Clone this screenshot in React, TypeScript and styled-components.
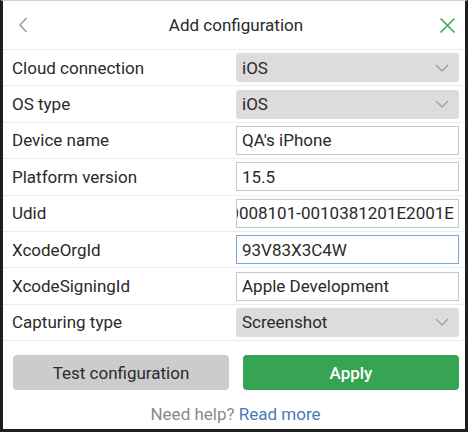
import styled, { createGlobalStyle } from "styled-components";

const GlobalStyle = createGlobalStyle`
  html, body {
    margin: 0;
    padding: 0;
    background: #ffffff;
  }
  * {
    box-sizing: border-box;
  }
`;

const Frame = styled.div`
  width: 468px;
  height: 432px;
  background: #ffffff;
  border-top: 1px solid #cfcfcf;
  border-left: 3px solid #1e1e1e;
  border-right: 3px solid #1e1e1e;
  border-bottom: 3px solid #1e1e1e;
  font-family: Roboto, "Liberation Sans", sans-serif;
  color: #2a2a2a;
  display: flex;
  flex-direction: column;
  padding: 0 3px 0 9px;
`;

const Header = styled.div`
  height: 49px;
  display: flex;
  align-items: center;
  justify-content: space-between;
  border-bottom: 1px solid #ececec;
  margin-right: -3px;
  margin-left: -9px;
  padding-left: 10px;
  padding-right: 8px;
`;

const Title = styled.div`
  font-size: 17px;
  color: #2a2a2a;
  flex: 1;
  text-align: center;
  padding-left: 2px;
`;

const IconButton = styled.span`
  width: 20px;
  height: 20px;
  display: flex;
  align-items: center;
  justify-content: center;
`;

const Rows = styled.div`
  display: flex;
  flex-direction: column;
`;

const Row = styled.div`
  height: 36.4px;
  display: grid;
  grid-template-columns: 224px 1fr;
  align-items: center;
  border-bottom: 1px solid #ececec;
  margin-left: -9px;
  margin-right: -3px;
  padding-left: 9px;
  padding-right: 6px;
`;

const Label = styled.div`
  font-size: 17px;
  color: #2a2a2a;
`;

const Select = styled.div`
  height: 29px;
  background: #dcdcdc;
  border-radius: 3px;
  display: flex;
  align-items: center;
  justify-content: space-between;
  padding: 0 10px 0 6px;
  font-size: 17px;
  color: #2a2a2a;
`;

const Input = styled.div<{ $focused?: boolean; $alignEnd?: boolean }>`
  height: 29px;
  background: #ffffff;
  border: 1px solid ${({ $focused }) => ($focused ? "#7fa6d6" : "#c8c8c8")};
  display: flex;
  align-items: center;
  justify-content: ${({ $alignEnd }) => ($alignEnd ? "flex-end" : "flex-start")};
  padding: 0 4px 0 5px;
  font-size: 17px;
  color: #2a2a2a;
  overflow: hidden;
  white-space: nowrap;
`;

const Actions = styled.div`
  display: grid;
  grid-template-columns: 1fr 1fr;
  gap: 14px;
  padding: 14px 3px 0 1px;
`;

const Button = styled.button<{ $primary?: boolean }>`
  height: 35px;
  border: none;
  border-radius: 4px;
  font-family: Roboto, "Liberation Sans", sans-serif;
  font-size: 17px;
  font-weight: ${({ $primary }) => ($primary ? 500 : 400)};
  background: ${({ $primary }) => ($primary ? "#36a452" : "#cccccc")};
  color: ${({ $primary }) => ($primary ? "#ffffff" : "#2a2a2a")};
`;

const Help = styled.div`
  text-align: center;
  font-size: 17px;
  color: #8a8a8a;
  padding-top: 14px;
  padding-right: 3px;
`;

const Link = styled.a`
  color: #4a7ab4;
  text-decoration: none;
`;

const Chevron = ({ color = "#9a9a9a" }: { color?: string }) => (
  <svg width="14" height="8" viewBox="0 0 14 8" fill="none">
    <path d="M1 1l6 6 6-6" stroke={color} strokeWidth="1.2" />
  </svg>
);

const fields: { label: string; value: string; kind: "select" | "input"; focused?: boolean; alignEnd?: boolean }[] = [
  { label: "Cloud connection", value: "iOS", kind: "select" },
  { label: "OS type", value: "iOS", kind: "select" },
  { label: "Device name", value: "QA's iPhone", kind: "input" },
  { label: "Platform version", value: "15.5", kind: "input" },
  { label: "Udid", value: "00008101-0010381201E2001E", kind: "input", alignEnd: true },
  { label: "XcodeOrgId", value: "93V83X3C4W", kind: "input", focused: true },
  { label: "XcodeSigningId", value: "Apple Development", kind: "input" },
  { label: "Capturing type", value: "Screenshot", kind: "select" },
];

const App = () => {
  return (
    <>
      <GlobalStyle />
      <Frame>
        <Header>
          <IconButton>
            <svg width="10" height="16" viewBox="0 0 10 16" fill="none">
              <path d="M8.5 1L2 8l6.5 7" stroke="#9c9c9c" strokeWidth="1.5" />
            </svg>
          </IconButton>
          <Title>Add configuration</Title>
          <IconButton>
            <svg width="17" height="17" viewBox="0 0 17 17" fill="none">
              <path d="M1.5 1.5l14 14M15.5 1.5l-14 14" stroke="#3fae5e" strokeWidth="1.7" />
            </svg>
          </IconButton>
        </Header>
        <Rows>
          {fields.map((f) => (
            <Row key={f.label}>
              <Label>{f.label}</Label>
              {f.kind === "select" ? (
                <Select>
                  {f.value}
                  <Chevron />
                </Select>
              ) : (
                <Input $focused={f.focused} $alignEnd={f.alignEnd}>
                  {f.value}
                </Input>
              )}
            </Row>
          ))}
        </Rows>
        <Actions>
          <Button>Test configuration</Button>
          <Button $primary>Apply</Button>
        </Actions>
        <Help>
          Need help? <Link href="#">Read more</Link>
        </Help>
      </Frame>
    </>
  );
};

export default App;
